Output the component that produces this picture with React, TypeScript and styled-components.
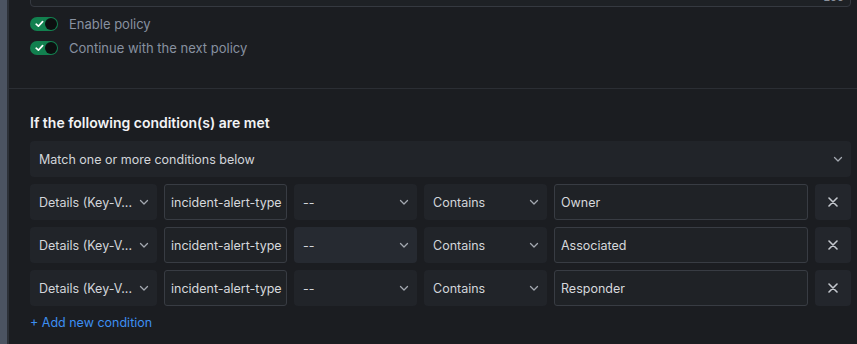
import styled, { createGlobalStyle } from "styled-components";

const GlobalStyle = createGlobalStyle`
  html, body {
    margin: 0;
    padding: 0;
    background: #1b1d21;
    font-family: Inter, "Noto Sans", sans-serif;
    -webkit-font-smoothing: antialiased;
  }
`;

type Condition = {
  field: string;
  key: string;
  op: string;
  match: string;
  value: string;
  hovered?: boolean;
};

const conditions: Condition[] = [
  { field: "Details (Key-V...", key: "incident-alert-type", op: "--", match: "Contains", value: "Owner" },
  { field: "Details (Key-V...", key: "incident-alert-type", op: "--", match: "Contains", value: "Associated", hovered: true },
  { field: "Details (Key-V...", key: "incident-alert-type", op: "--", match: "Contains", value: "Responder" },
];

function Chevron() {
  return (
    <svg width="10" height="10" viewBox="0 0 10 10" fill="none">
      <path d="M1.5 3.5 L5 7 L8.5 3.5" stroke="#a3a8b0" strokeWidth="1.3" strokeLinecap="round" strokeLinejoin="round" />
    </svg>
  );
}

function Cross() {
  return (
    <svg width="10" height="10" viewBox="0 0 10 10" fill="none">
      <path d="M1 1 L9 9 M9 1 L1 9" stroke="#c4c8ce" strokeWidth="1.6" strokeLinecap="round" />
    </svg>
  );
}

function Toggle() {
  return (
    <Track>
      <svg width="9" height="8" viewBox="0 0 9 8" fill="none">
        <path d="M1.2 4.2 L3.4 6.2 L7.6 1.6" stroke="#ffffff" strokeWidth="1.7" strokeLinecap="round" strokeLinejoin="round" />
      </svg>
      <Knob />
    </Track>
  );
}

function App() {
  return (
    <Page>
      <GlobalStyle />
      <Rail />
      <Main>
        <Top>
          <TextBox>
            <Counter>200</Counter>
          </TextBox>
          <Toggles>
            <ToggleRow>
              <Toggle />
              <ToggleLabel>Enable policy</ToggleLabel>
            </ToggleRow>
            <ToggleRow>
              <Toggle />
              <ToggleLabel>Continue with the next policy</ToggleLabel>
            </ToggleRow>
          </Toggles>
        </Top>
        <Section>
          <Heading>If the following condition(s) are met</Heading>
          <Select>
            <span>Match one or more conditions below</span>
            <Chevron />
          </Select>
          <Rows>
            {conditions.map((c, i) => (
              <Row key={i}>
                <Select>
                  <span>{c.field}</span>
                  <Chevron />
                </Select>
                <Input>{c.key}</Input>
                <Select hovered={c.hovered}>
                  <span>{c.op}</span>
                  <Chevron />
                </Select>
                <Select>
                  <span>{c.match}</span>
                  <Chevron />
                </Select>
                <Input>{c.value}</Input>
                <RemoveBtn>
                  <Cross />
                </RemoveBtn>
              </Row>
            ))}
          </Rows>
          <AddLink>+ Add new condition</AddLink>
        </Section>
      </Main>
    </Page>
  );
}

export default App;

const Page = styled.div`
  display: flex;
  width: 857px;
  height: 344px;
  overflow: hidden;
  background: #1b1d21;
`;

const Rail = styled.div`
  width: 9px;
  flex-shrink: 0;
  background: linear-gradient(to right, #4b5361 0, #4b5361 7px, #2c3037 7px);
`;

const Main = styled.div`
  flex: 1;
  display: flex;
  flex-direction: column;
`;

const Top = styled.div`
  padding: 0 6px 0 21px;
  height: 88px;
  border-bottom: 1px solid #2b2e34;
`;

const TextBox = styled.div`
  margin-top: -31px;
  height: 38px;
  border: 1px solid #353940;
  border-radius: 4px;
  background: #1e2125;
  display: flex;
  align-items: flex-end;
  justify-content: flex-end;
  padding: 0 6px 3px 0;
  box-sizing: border-box;
`;

const Counter = styled.span`
  font-size: 11px;
  line-height: 11px;
  color: #8b919a;
`;

const Toggles = styled.div`
  display: flex;
  flex-direction: column;
  gap: 10px;
  margin-top: 10px;
`;

const ToggleRow = styled.div`
  display: flex;
  align-items: center;
  gap: 11px;
  height: 14px;
`;

const Track = styled.div`
  width: 28px;
  height: 14px;
  border-radius: 7px;
  background: #12804f;
  display: flex;
  align-items: center;
  justify-content: space-between;
  padding: 0 1px 0 5px;
  box-sizing: border-box;
`;

const Knob = styled.div`
  width: 12px;
  height: 12px;
  border-radius: 50%;
  background: #0d0f10;
`;

const ToggleLabel = styled.span`
  font-size: 13px;
  color: #8891a0;
`;

const Section = styled.div`
  padding: 25px 6px 0 21px;
  display: flex;
  flex-direction: column;
`;

const Heading = styled.h3`
  margin: 0 0 9px;
  font-size: 14px;
  line-height: 18px;
  font-weight: 600;
  color: #f2f3f5;
`;

type SelectProps = {
  hovered?: boolean;
};

const Select = styled.div<SelectProps>`
  height: 36px;
  box-sizing: border-box;
  border-radius: 4px;
  background: ${(p) => (p.hovered ? "#262a31" : "#212429")};
  display: flex;
  align-items: center;
  justify-content: space-between;
  gap: 6px;
  padding: 0 8px 0 9px;
  font-size: 12.5px;
  color: #d2d5da;
  min-width: 0;

  span {
    white-space: nowrap;
    overflow: hidden;
  }

  svg {
    flex-shrink: 0;
  }
`;

const Rows = styled.div`
  display: flex;
  flex-direction: column;
  gap: 7px;
  margin-top: 7px;
`;

const Row = styled.div`
  display: grid;
  grid-template-columns: 127px 123px 123px 123px 1fr 36px;
  column-gap: 7px;
`;

const Input = styled.div`
  height: 36px;
  box-sizing: border-box;
  border: 1px solid #383c43;
  border-radius: 3px;
  background: #1f2226;
  display: flex;
  align-items: center;
  padding: 0 6px;
  font-size: 12.5px;
  color: #d6d8dc;
  white-space: nowrap;
  overflow: hidden;
`;

const RemoveBtn = styled.div`
  height: 36px;
  border-radius: 4px;
  background: #23262c;
  display: flex;
  align-items: center;
  justify-content: center;
`;

const AddLink = styled.a`
  margin-top: 9px;
  font-size: 12.5px;
  color: #3d8ff2;
  cursor: pointer;
`;
